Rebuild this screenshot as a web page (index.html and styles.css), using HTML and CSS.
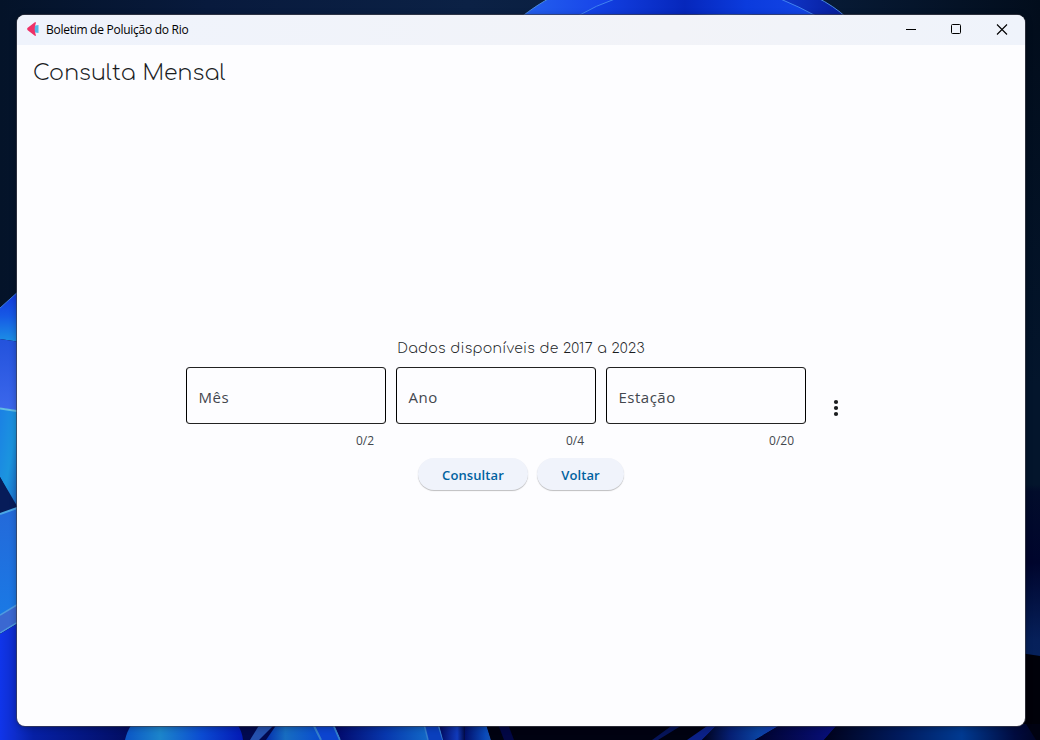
FILE: index.html
```html
<!DOCTYPE html>
<html lang="pt-BR">
<head>
<meta charset="utf-8">
<title>Boletim de Poluição do Rio</title>
<link rel="stylesheet" href="styles.css">
</head>
<body>
<svg class="wallpaper" viewBox="0 0 1040 740" preserveAspectRatio="none" aria-hidden="true">
  <defs>
    <linearGradient id="sky"><stop offset="0" stop-color="#041329"/><stop offset=".2" stop-color="#081a3d"/><stop offset=".45" stop-color="#0b2145"/><stop offset=".8" stop-color="#071a35"/><stop offset="1" stop-color="#020d1c"/></linearGradient>
    <linearGradient id="right" x2="0" y2="1"><stop offset="0" stop-color="#020d1c"/><stop offset=".5" stop-color="#03152c"/><stop offset=".64" stop-color="#03152c"/><stop offset=".65" stop-color="#020c2b"/><stop offset=".75" stop-color="#00052d"/><stop offset=".86" stop-color="#06205a"/><stop offset="1" stop-color="#062762"/></linearGradient>
    <linearGradient id="p1" x2="0" y2="1"><stop offset="0" stop-color="#1234dc"/><stop offset=".5" stop-color="#1659e5"/><stop offset="1" stop-color="#1c91e5"/></linearGradient>
    <linearGradient id="p2" x2="0" y2="1"><stop offset="0" stop-color="#2352dc"/><stop offset="1" stop-color="#3c68ec"/></linearGradient>
    <linearGradient id="p3" x2="1" y2="1"><stop offset="0" stop-color="#1b80e4"/><stop offset=".5" stop-color="#1b95df"/><stop offset="1" stop-color="#1c5ec2"/></linearGradient>
    <linearGradient id="p4" x2="0" y2="1"><stop offset="0" stop-color="#2469d9"/><stop offset="1" stop-color="#1a79e5"/></linearGradient>
    <linearGradient id="p5" x2="1"><stop offset="0" stop-color="#1035ea"/><stop offset="1" stop-color="#0d2ac2"/></linearGradient>
    <linearGradient id="base"><stop offset="0" stop-color="#0d2dc9"/><stop offset=".15" stop-color="#0620a5"/><stop offset="1" stop-color="#020d60"/></linearGradient>
    <linearGradient id="b1"><stop offset="0" stop-color="#0b55c6"/><stop offset=".3" stop-color="#1c85cb"/><stop offset=".65" stop-color="#0b4bd2"/><stop offset="1" stop-color="#0319b5"/></linearGradient>
    <linearGradient id="b2"><stop offset="0" stop-color="#0530af"/><stop offset=".35" stop-color="#176dc1"/><stop offset="1" stop-color="#094bd0"/></linearGradient>
    <linearGradient id="b3"><stop offset="0" stop-color="#020768"/><stop offset=".55" stop-color="#0737ad"/><stop offset="1" stop-color="#1269c8"/></linearGradient>
    <linearGradient id="b4"><stop offset="0" stop-color="#02095d"/><stop offset=".7" stop-color="#113bbc"/><stop offset="1" stop-color="#020a45"/></linearGradient>
    <linearGradient id="b5"><stop offset="0" stop-color="#02106b"/><stop offset=".8" stop-color="#0a4bbb"/><stop offset="1" stop-color="#1753ac"/></linearGradient>
    <linearGradient id="b6"><stop offset="0" stop-color="#000219"/><stop offset=".35" stop-color="#061f73"/><stop offset=".7" stop-color="#0a42a0"/><stop offset="1" stop-color="#1637bd"/></linearGradient>
    <linearGradient id="b7"><stop offset="0" stop-color="#00032b"/><stop offset="1" stop-color="#081080"/></linearGradient>
    <linearGradient id="b8"><stop offset="0" stop-color="#00021b"/><stop offset=".35" stop-color="#001a5c"/><stop offset=".65" stop-color="#003a91"/><stop offset=".9" stop-color="#000b3f"/><stop offset="1" stop-color="#000527"/></linearGradient>
    <linearGradient id="top"><stop offset="0" stop-color="#2461ee"/><stop offset=".3" stop-color="#153fe8"/><stop offset=".7" stop-color="#1543e0"/><stop offset="1" stop-color="#061c9a"/></linearGradient>
    <linearGradient id="inner"><stop offset="0" stop-color="#1647ee"/><stop offset=".45" stop-color="#0627bc"/><stop offset=".7" stop-color="#0b3bdd"/><stop offset="1" stop-color="#1446e7"/></linearGradient>
  </defs>
  <rect width="1040" height="740" fill="url(#sky)"/>
  <path d="M520 18Q538 4 552 -3H816Q834 6 847 18Z" fill="url(#top)"/>
  <path d="M520 18Q538 4 552 -3M816 -3Q834 6 847 18" fill="none" stroke="#4889df"/>
  <path d="M574 18Q596 5 620 -3H776Q800 7 820 18Z" fill="url(#inner)"/>
  <path d="M574 18Q596 5 620 -3M776 -3Q800 7 820 18" fill="none" stroke="#4182ef"/>
  <path d="M678 17Q725 12 772 17" fill="#1645d4" stroke="#3978ee"/>
  <path d="M1020 30H1040V740H1020Z" fill="url(#right)"/>
  <path d="M1020 653L1040 656V740H1020Z" fill="#000109"/>

  <path d="M0 308L20 290V342L0 339Z" fill="url(#p1)"/>
  <path d="M0 308L20 290" stroke="#3c79dc"/>
  <path d="M0 339L20 342V411L0 408Z" fill="url(#p2)"/>
  <path d="M0 408L20 411V514L0 477Z" fill="url(#p3)"/>
  <path d="M0 408.500L20 411.500" stroke="#62bde4" stroke-width="2"/>
  <path d="M0 477L20 511L0 515Z" fill="#071c59"/>
  <path d="M0 514L20 507V604L0 615Z" fill="url(#p4)"/>
  <path d="M0 514L20 507" stroke="#4aa6e6" stroke-width="2"/>
  <path d="M0 615L20 603V621L0 633Z" fill="#3b68d1"/>
  <path d="M0 615L20 603M0 633L20 621" stroke="#4e9be0" stroke-width="1.500"/>
  <path d="M0 634L20 622V740H0Z" fill="url(#p5)"/>

  <rect y="724" x="16" width="115" height="16" fill="url(#base)"/>
  <rect y="724" x="131" width="390" height="16" fill="#020a50"/>
  <path d="M125 740Q127 731 132 724H237Q242 731 243 740Z" fill="url(#b1)"/>
  <path d="M250 740Q256 730 260 724H275L259 740Z" fill="#2450ae"/>
  <path d="M266 740L277 724H313L321 740Z" fill="url(#b2)"/>
  <path d="M313 724H333L340 740H321Z" fill="#0c44cf"/>
  <path d="M313 724L321 740M333 724L340 740" stroke="#347fcb" stroke-width="2"/>
  <path d="M334 724H424L428 740H341Z" fill="url(#b3)"/>
  <path d="M424 724H438L443 740H428Z" fill="#0a3fbd"/>
  <path d="M424 724L428 740M438 724L443 740" stroke="#347ccb" stroke-width="1.500"/>
  <path d="M439 724H465V740H443Z" fill="url(#b4)"/>
  <path d="M465 724H486L491 740H465Z" fill="url(#b5)"/>
  <path d="M486 724H1040V740H491Z" fill="#000211"/>
  <path d="M498 724H508L514 740H504Z" fill="#020744"/>
  <path d="M652 740L674 724H684L658 740Z" fill="#061458"/>
  <path d="M687 740L710 724H718L702 740Z" fill="#0b2187"/>
  <path d="M702 740L718 724H782L755 740Z" fill="url(#b6)"/>
  <path d="M755 740L782 724H838L824 740Z" fill="url(#b7)"/>
  <path d="M824 740L838 724H1026L1036 740Z" fill="url(#b8)"/>
</svg>

<main class="window">
  <header class="titlebar">
    <svg class="app-icon" viewBox="0 0 12 14"><path d="M8 3.500L11.500 3V11L8 10.500L6 7Z" fill="#55b9e5"/><path d="M8.200 0L9 .7Q6.300 7 9 13.400L8.200 14L.7 8.200Q-.4 7 .7 5.800Z" fill="#ee3167"/></svg>
    <span class="app-title">Boletim de Poluição do Rio</span>
    <svg class="controls" viewBox="0 0 138 30"><g fill="none" stroke="#000"><path d="M19 14.500H29"/><rect x="64.500" y="9.500" width="9" height="9" rx="1"/><path d="M110 9.500L120 19.500M120 9.500L110 19.500" stroke-width="1.100"/></g></svg>
  </header>
  <h1 class="heading">Consulta Mensal</h1>
  <section class="query">
    <p class="availability">Dados disponíveis de 2017 a 2023</p>
    <div class="fields">
      <div class="field"><div class="box">Mês</div><div class="count">0/2</div></div>
      <div class="field"><div class="box">Ano</div><div class="count">0/4</div></div>
      <div class="field"><div class="box">Estação</div><div class="count">0/20</div></div>
      <svg class="more" viewBox="0 0 40 40"><g fill="#1a1c1e"><circle cx="20" cy="14" r="2.100"/><circle cx="20" cy="20" r="2.100"/><circle cx="20" cy="26" r="2.100"/></g></svg>
    </div>
    <div class="actions"><button class="button primary">Consultar</button><button class="button back">Voltar</button></div>
  </section>
</main>
</body>
</html>
```

FILE: styles.css
```css
* { box-sizing: border-box; }
body {
  margin: 0;
  width: 1040px;
  height: 740px;
  padding: 15px 15px 14px 17px;
  overflow: hidden;
  font-family: "Segoe UI", "Open Sans", sans-serif;
}
.wallpaper { position: absolute; inset: 0; width: 1040px; height: 740px; z-index: -1; }
.window {
  display: flex;
  flex-direction: column;
  width: 1008px;
  height: 711px;
  overflow: hidden;
  border-radius: 8px;
  background: #fdfdff;
  color: #1a1c1e;
  box-shadow: 0 0 0 1px rgba(65, 65, 75, .65), 0 1px 7px rgba(0, 0, 0, .35);
}
.titlebar { display: flex; align-items: center; flex: none; height: 30px; padding-left: 10px; background: linear-gradient(90deg, #eff3fc 0%, #f2f3f8 65%, #eff3fb 100%); }
.app-icon { width: 12px; height: 14px; margin-right: 7px; margin-top: -2px; }
.app-title { flex: 1; padding-bottom: 2px; font-size: 12px; color: #000; letter-spacing: -.27px; white-space: nowrap; }
.controls { width: 138px; height: 30px; }
.heading {
  margin: 13px 0 0 16px;
  height: 30px;
  font: 400 22px/30px Comfortaa, Lato, sans-serif;
  font-weight: 300;
  letter-spacing: .1px;
}
.query { display: flex; flex-direction: column; align-items: center; margin-top: 251px; }
.availability { margin: 0; height: 20px; font: 300 14px/20px Comfortaa, Lato, sans-serif; letter-spacing: .3px; }
.fields { display: flex; gap: 10px; margin-top: 8px; height: 82px; }
.field { width: 200px; }
.box {
  display: flex;
  align-items: center;
  height: 57px;
  padding: 2px 11px 0 11.5px;
  border: 1px solid #000;
  border-top-color: #222;
  border-bottom-color: #222;
  border-radius: 4px;
  color: #43474e;
  font-size: 15px;
  letter-spacing: .5px;
}
.count { padding: 8px 12px 0; height: 25px; font-size: 12px; line-height: 18px; text-align: right; color: #43474e; }
.more { width: 40px; height: 40px; margin-top: 21px; }
.actions { display: flex; gap: 9px; margin-top: 9px; }
.button {
  height: 32px;
  padding: 2px 0 0;
  border: 0;
  border-radius: 16px;
  background: #f0f3fb;
  color: #0062a0;
  font: 600 13px/20px "Segoe UI", "Open Sans", sans-serif;
  letter-spacing: .1px;
  box-shadow: 0 1px 1px rgba(0, 0, 0, .25);
}
.primary { width: 110px; }
.back { width: 87px; }
```
